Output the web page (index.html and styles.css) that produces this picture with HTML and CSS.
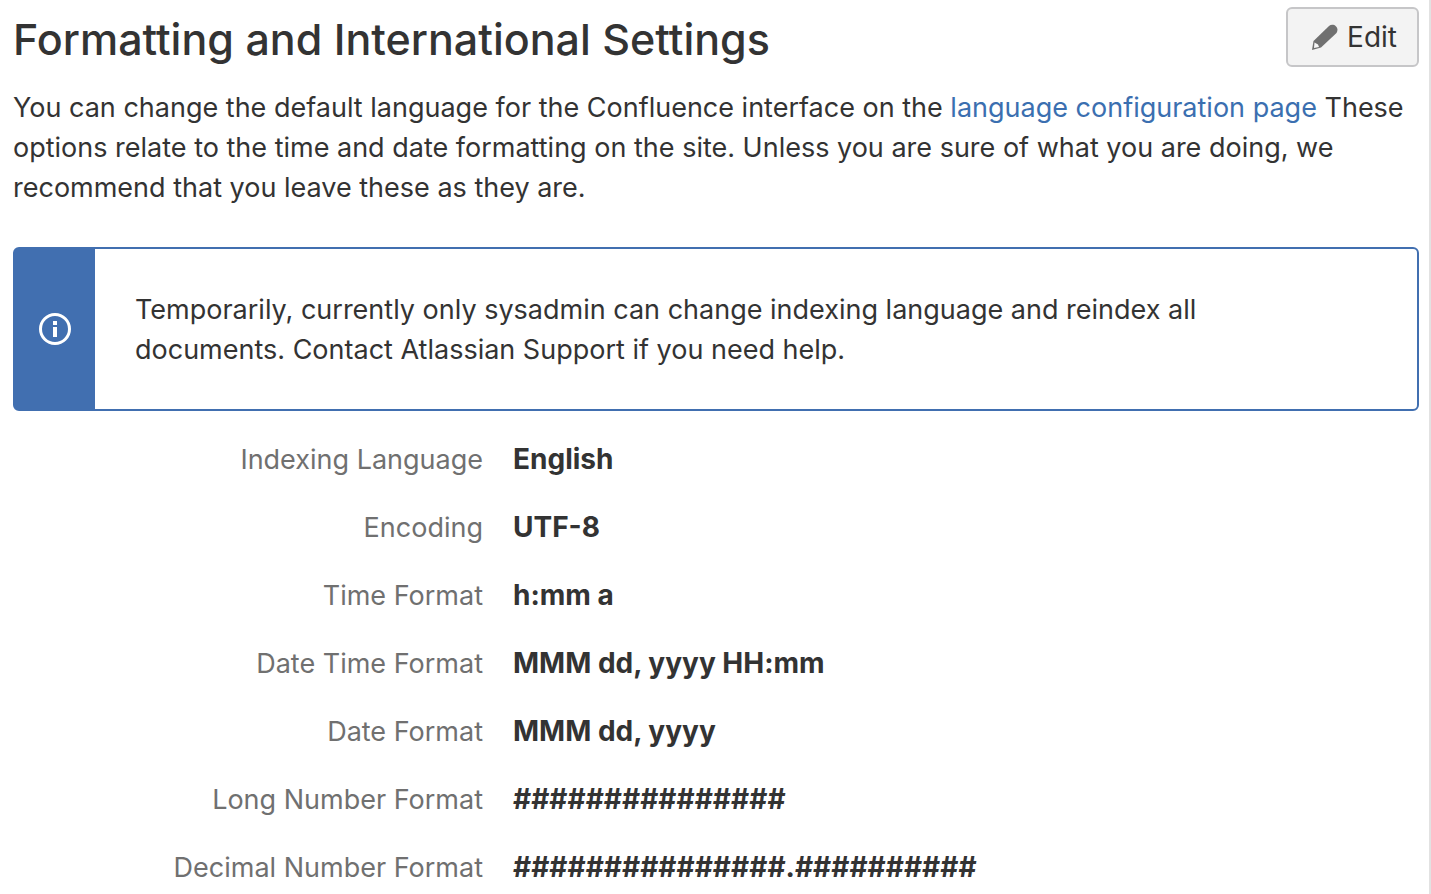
FILE: index.html
```html
<!DOCTYPE html>
<html lang="en">
<head>
<meta charset="utf-8">
<title>Formatting and International Settings</title>
<link rel="stylesheet" href="styles.css">
</head>
<body>
<main class="page">
  <header class="page-header">
    <h1 class="title">Formatting and International Settings</h1>
    <button class="edit-button" type="button">
      <svg class="pencil" viewBox="0 0 28 28" aria-hidden="true"><path d="M1 27 2.500 18 18 3C22-.5 29 4 25.500 10L10 24.500Z" fill="#707070"/><path d="M3.500 19.500 7 21.500 8 24 3 25Z" fill="#f7f7f7"/></svg>
      <span>Edit</span>
    </button>
  </header>
  <p class="intro">You can change the default language for the Confluence interface on the <a class="link" href="#">language configuration page</a> These options relate to the time and date formatting on the site. Unless you are sure of what you are doing, we recommend that you leave these as they are.</p>
  <section class="notice">
    <div class="notice-side">
      <svg class="info" viewBox="0 0 34 34" aria-hidden="true"><circle cx="17" cy="17" r="14.5" fill="none" stroke="#fff" stroke-width="3"/><path d="M15 9h4v4h-4zM15 15h4v10h-4z" fill="#fff"/></svg>
    </div>
    <p class="notice-text">Temporarily, currently only sysadmin can change indexing language and reindex all documents. Contact Atlassian Support if you need help.</p>
  </section>
  <dl class="settings">
    <dt class="label">Indexing Language</dt><dd class="value">English</dd>
    <dt class="label">Encoding</dt><dd class="value">UTF-8</dd>
    <dt class="label">Time Format</dt><dd class="value">h:mm a</dd>
    <dt class="label">Date Time Format</dt><dd class="value">MMM dd, yyyy HH:mm</dd>
    <dt class="label">Date Format</dt><dd class="value">MMM dd, yyyy</dd>
    <dt class="label">Long Number Format</dt><dd class="value">###############</dd>
    <dt class="label">Decimal Number Format</dt><dd class="value">###############.##########</dd>
  </dl>
</main>
</body>
</html>
```
FILE: styles.css
```css
* { box-sizing: border-box; }
body { margin: 0; background: #fff; color: #333; font: 27px/40px Inter, sans-serif; }
.page { min-height: 100vh; padding: 7px 10px 0 13px; border-right: 2px solid #e2e2e2; }
.page-header { display: flex; justify-content: space-between; align-items: flex-start; }
.title { margin: 4px 0 0; font-size: 43px; line-height: 56px; font-weight: 500; }
.edit-button { display: flex; align-items: center; gap: 8px; height: 60px; padding: 0 20px 0 23px; border: 2px solid #c6c6c8; border-radius: 6px; background: #f3f3f3; color: #333; font: inherit; font-size: 28px; }
.pencil { width: 28px; height: 28px; }
.intro { margin: 21px 0 39px; }
.link { color: #3b6fb0; text-decoration: none; }
.notice { display: flex; border: 2px solid #416fb0; border-radius: 6px; }
.notice-side { display: flex; align-items: center; justify-content: center; flex: none; width: 80px; background: #416fb0; }
.info { width: 34px; height: 34px; }
.notice-text { margin: 0; padding: 41px 140px 39px 40px; }
.settings { display: grid; grid-template-columns: 470px 1fr; align-items: baseline; row-gap: 27px; column-gap: 30px; margin: 28px 0 0; }
.label { color: #707070; text-align: right; }
.value { margin: 0; font-size: 28px; font-weight: 700; }
```
